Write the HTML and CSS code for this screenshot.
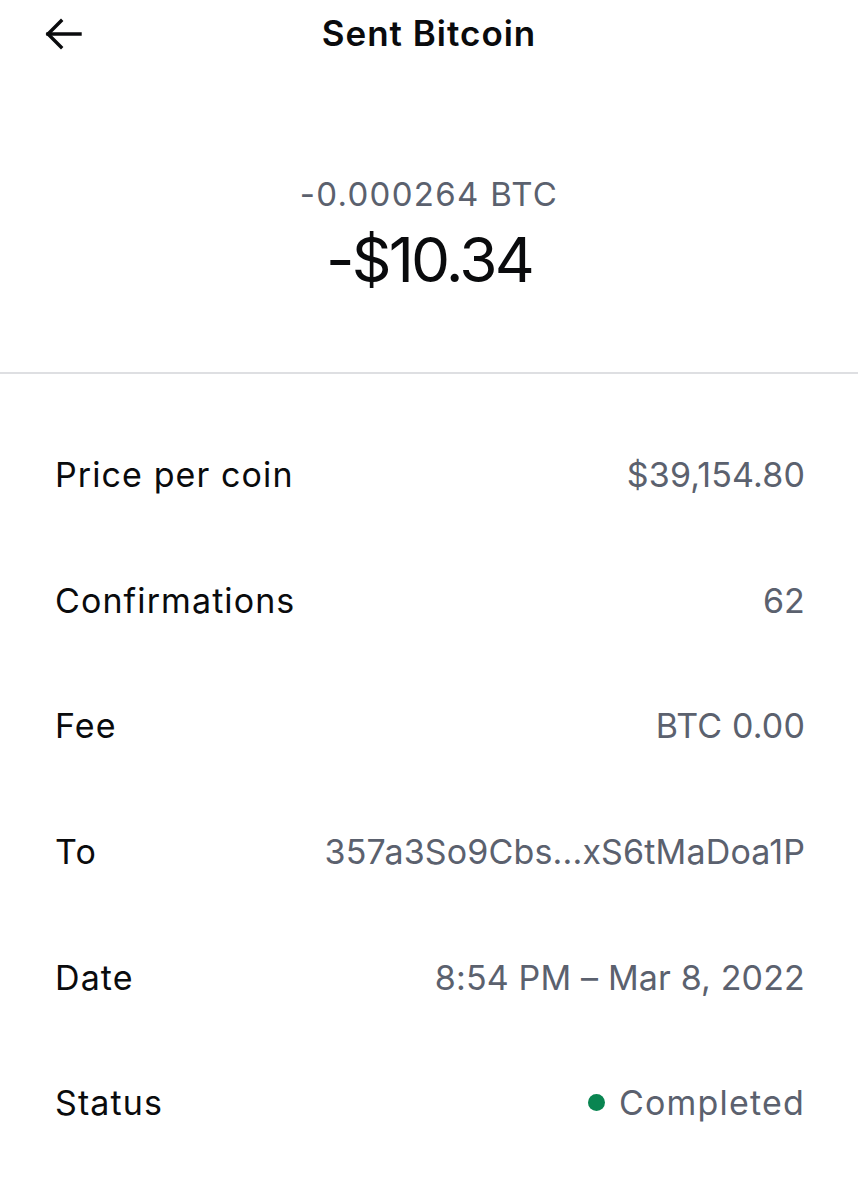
FILE: index.html
```html
<!DOCTYPE html>
<html lang="en">
<head>
  <meta charset="UTF-8">
  <meta name="viewport" content="width=device-width, initial-scale=1.0">
  <title>Sent Bitcoin</title>
  <link rel="stylesheet" href="styles.css">
</head>
<body>
  <header class="topbar">
    <button class="back" aria-label="Back">
      <svg width="40" height="40" viewBox="0 0 40 40" fill="none" stroke="#0a0b0d" stroke-width="3.4" stroke-linecap="square">
        <path d="M38 20H6"/>
        <path d="M19 7L6 20l13 13"/>
      </svg>
    </button>
    <h1 class="title">Sent Bitcoin</h1>
  </header>

  <section class="amount">
    <div class="crypto">-0.000264 BTC</div>
    <div class="fiat">-$10.34</div>
  </section>

  <hr class="divider">

  <ul class="details">
    <li class="row"><span class="label">Price per coin</span><span class="value">$39,154.80</span></li>
    <li class="row"><span class="label">Confirmations</span><span class="value">62</span></li>
    <li class="row"><span class="label">Fee</span><span class="value">BTC 0.00</span></li>
    <li class="row"><span class="label">To</span><span class="value">357a3So9Cbs...xS6tMaDoa1P</span></li>
    <li class="row"><span class="label">Date</span><span class="value">8:54 PM – Mar 8, 2022</span></li>
    <li class="row"><span class="label">Status</span><span class="value"><span class="dot"></span><span class="status">Completed</span></span></li>
  </ul>
</body>
</html>
```

FILE: styles.css
```css
* {
  box-sizing: border-box;
}
body {
  margin: 0;
  background: #ffffff;
  font-family: Inter, "Noto Sans", sans-serif;
  color: #0a0b0d;
}
.topbar {
  position: relative;
  height: 66px;
  display: flex;
  align-items: center;
  justify-content: center;
}
.back {
  position: absolute;
  left: 42px;
  top: 14px;
  padding: 0;
  border: none;
  background: none;
  width: 40px;
  height: 40px;
}
.title {
  margin: 0;
  font-size: 35px;
  font-weight: 600;
  letter-spacing: 1px;
}
.amount {
  display: flex;
  flex-direction: column;
  align-items: center;
  padding-top: 106px;
}
.crypto {
  font-size: 33px;
  color: #5b616e;
  line-height: 44px;
  letter-spacing: 1.3px;
}
.fiat {
  font-size: 62px;
  line-height: 72px;
  margin-top: 8px;
  letter-spacing: -2.8px;
}
.divider {
  margin: 76px 0 0;
  border: none;
  border-top: 2px solid #dedfe2;
}
.details {
  list-style: none;
  margin: 0;
  padding: 38px 53px 0 55px;
}
.row {
  display: flex;
  justify-content: space-between;
  align-items: center;
  height: 125.6px;
  font-size: 34px;
}
.label {
  letter-spacing: 1.1px;
}
.value {
  color: #5b616e;
  display: flex;
  align-items: center;
  letter-spacing: 0.15px;
}
.status {
  letter-spacing: 1.2px;
}
.dot {
  width: 17px;
  height: 17px;
  border-radius: 50%;
  background: #098551;
  margin-right: 14px;
}
```
